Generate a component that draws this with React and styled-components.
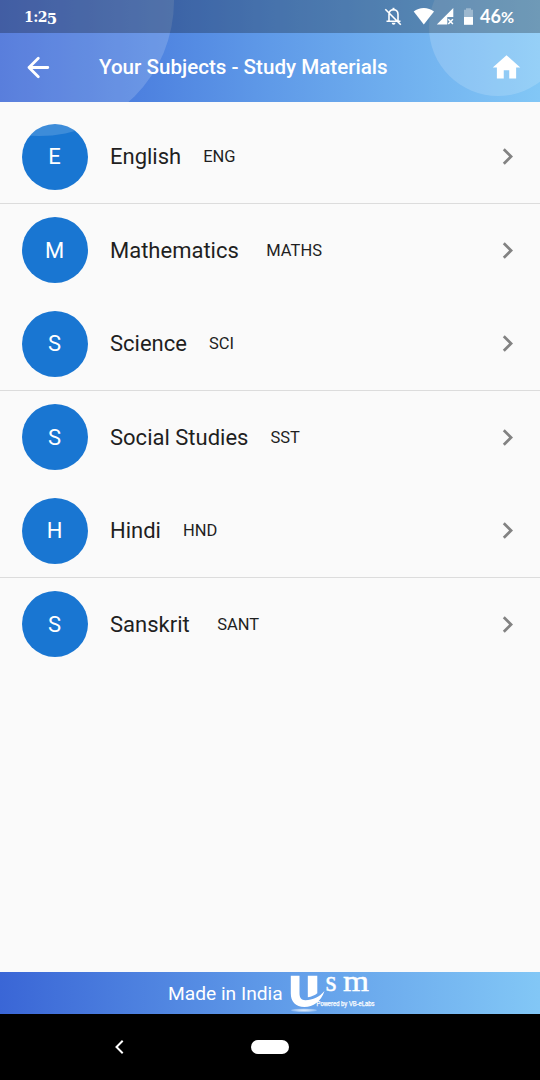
import React from "react";
import { MdChevronRight, MdHome } from "react-icons/md";
import styled, { createGlobalStyle, ThemeProvider } from "styled-components";

const theme = {
  background: "#fafafa",
  avatar: "#1976d2",
  text: "#1f1f1f",
  divider: "#dcdcdc",
  chevron: "#828282",
  gradient: "linear-gradient(90deg, #3a66d6 0%, #5f9ae8 50%, #82c7f6 100%)",
};

const GlobalStyle = createGlobalStyle`
  * {
    box-sizing: border-box;
  }
  body {
    margin: 0;
    font-family: Roboto, sans-serif;
  }
  svg {
    display: block;
    flex-shrink: 0;
    overflow: visible;
  }
`;

const Screen = styled.div`
  position: relative;
  width: 540px;
  height: 1080px;
  display: flex;
  flex-direction: column;
  overflow: hidden;
  background-color: ${({ theme }) => theme.background};
`;

const Header = styled.header`
  position: relative;
  height: 101.5px;
  flex-shrink: 0;
  background: ${({ theme }) => theme.gradient};
  color: #fff;
`;

const Bubble = styled.div`
  position: absolute;
  left: ${({ $x, $size }) => $x - $size / 2}px;
  top: ${({ $y, $size }) => $y - $size / 2}px;
  width: ${({ $size }) => $size}px;
  height: ${({ $size }) => $size}px;
  border-radius: 50%;
  background-color: rgba(255, 255, 255, 0.16);
  pointer-events: none;
  z-index: 1;
`;

const StatusBar = styled.div`
  position: relative;
  z-index: 2;
  height: 33px;
  padding: 0 25px 0 24px;
  display: flex;
  align-items: center;
  background-color: rgba(0, 0, 0, 0.26);
`;

const Clock = styled.span`
  font-family: "DejaVu Serif", serif;
  font-size: 14px;
  line-height: 20px;
  font-weight: 700;
  letter-spacing: -0.6px;
  margin-right: auto;
`;

const LowDigit = styled.span`
  position: relative;
  top: 2px;
  font-size: 15px;
`;

const StatusIcons = styled.div`
  display: flex;
  align-items: center;
`;

const Battery = styled.span`
  font-family: Lato, sans-serif;
  font-size: 18px;
  line-height: 20px;
  font-weight: 700;
  width: 35px;
  margin-left: 6px;
  white-space: nowrap;
`;

const Percent = styled.span`
  font-size: 16px;
`;

const Toolbar = styled.div`
  height: 68px;
  padding: 0 17px 0 22px;
  display: flex;
  align-items: center;
`;

const Title = styled.h1`
  margin: 0 auto 0 44px;
  font-size: 20.6px;
  line-height: 28px;
  font-weight: 500;
  white-space: nowrap;
`;

const SubjectList = styled.ul`
  flex: 1;
  margin: 0;
  padding: 8.5px 0 0;
  list-style: none;
`;

const SubjectRow = styled.li`
  height: 93.5px;
  padding: 0 16px 0 22px;
  display: flex;
  align-items: center;
  color: ${({ theme }) => theme.text};

  &:nth-child(odd) {
    box-shadow: inset 0 -1px 0 ${({ theme }) => theme.divider};
  }
`;

const Avatar = styled.div`
  width: 66px;
  height: 66px;
  margin-right: 22px;
  padding-right: 1px;
  border-radius: 50%;
  display: flex;
  justify-content: center;
  align-items: center;
  font-size: 22px;
  color: #fff;
  background-color: ${({ theme }) => theme.avatar};
`;

const Name = styled.span`
  font-size: 22px;
  line-height: 29px;
  margin-right: 22px;
  white-space: pre;
`;

const Code = styled.span`
  font-size: 16.5px;
  line-height: 23px;
  margin-right: auto;
`;

const Footer = styled.footer`
  height: 42px;
  padding-left: 168px;
  display: flex;
  background: ${({ theme }) => theme.gradient};
  color: #fff;
`;

const MadeIn = styled.span`
  width: 122px;
  font-size: 19.2px;
  line-height: 44px;
  white-space: nowrap;
`;

const NavBar = styled.nav`
  height: 66px;
  padding-left: 114px;
  display: flex;
  align-items: center;
  background-color: #000;
`;

const HomePill = styled.div`
  width: 38px;
  height: 14px;
  margin-left: 127px;
  border-radius: 7px;
  background-color: #fff;
`;

const subjects = [
  { name: "English", code: "ENG" },
  { name: "Mathematics ", code: "MATHS" },
  { name: "Science", code: "SCI" },
  { name: "Social Studies", code: "SST" },
  { name: "Hindi", code: "HND" },
  { name: "Sanskrit ", code: "SANT" },
];

const SystemIcons = () => (
  <svg width="90" height="22" viewBox="384 6 90 22" fill="#fff">
    <g fill="none" stroke="#fff" strokeWidth="1.6">
      <path d="M389 21v-6.5c0-3 2-4.7 4.5-4.7s4.5 1.7 4.5 4.7V21M386.5 21.3h14M385.3 9.2l15.5 15.5" />
      <path d="M393.5 7.8v2.5" strokeWidth="2" />
    </g>
    <path d="M391.7 22.8h3.8a1.9 1.9 0 0 1-3.8 0z" />
    <path d="M413.7 11.6C416.5 9.2 420 8 423.8 8s7.3 1.2 10.2 3.6L423.8 24.4z" />
    <path d="M453.3 8v9h-6v7.5h-10.5z" />
    <path d="M448.3 19.3l4.6 4.8m0-4.8l-4.6 4.8" stroke="#fff" strokeWidth="1.5" />
    <path d="M466 8.2h5v1.5h2V17h-9V9.7h2z" opacity=".35" />
    <path d="M464 17h9v7.8h-9z" />
  </svg>
);

const BackArrow = () => (
  <svg width="33" height="33" viewBox="0 0 33 33" fill="none" stroke="#fff" strokeWidth="2.8" strokeLinecap="round">
    <path d="M7 16.5h18.8M16.3 7.2L7 16.5l9.3 9.3" strokeLinejoin="round" />
  </svg>
);

const UsmLogo = () => (
  <svg width="90" height="42" viewBox="0 0 90 42" fill="#fff">
    <defs>
      <radialGradient id="shade">
        <stop offset="0" stopColor="#fff" stopOpacity=".85" />
        <stop offset="1" stopColor="#fff" stopOpacity=".25" />
      </radialGradient>
    </defs>
    <path d="M.8 3.8H9.500V21c0 4.800 2 7.200 5.800 7.200C23 28.200 29.500 25 34.500 19 31 29.500 23 35 14.500 35 5.500 35 .8 29.500.8 21.500z" />
    <path d="M17.8 3.8h9.500v17.500c-2.600 2-5.800 3.400-9.500 4z" />
    <ellipse cx="14" cy="38.200" rx="13" ry="1.800" fill="url(#shade)" />
    <g fontFamily="Liberation Serif, serif" fontSize="28.5" stroke="#fff" strokeWidth=".4">
      <text x="35.5" y="19.3">s</text>
      <text x="53" y="19.3" textLength="26" lengthAdjust="spacingAndGlyphs">m</text>
    </g>
    <text
      x="26.5"
      y="33.6"
      fontFamily="Liberation Sans, sans-serif"
      fontSize="6.5"
      textLength="58"
      lengthAdjust="spacingAndGlyphs"
      stroke="#fff"
      strokeWidth=".25"
    >
      Powered by VB-eLabs
    </text>
  </svg>
);

const Subject = ({ subject }) => (
  <SubjectRow>
    <Avatar>{subject.name[0]}</Avatar>
    <Name>{subject.name}</Name>
    <Code>{subject.code}</Code>
    <MdChevronRight size={33} color={theme.chevron} />
  </SubjectRow>
);

export default function App() {
  return (
    <ThemeProvider theme={theme}>
      <GlobalStyle />
      <Screen>
        <Header>
          <StatusBar>
            <Clock>
              1:2<LowDigit>5</LowDigit>
            </Clock>
            <StatusIcons>
              <SystemIcons />
              <Battery>
                46<Percent>%</Percent>
              </Battery>
            </StatusIcons>
          </StatusBar>
          <Toolbar>
            <BackArrow />
            <Title>Your Subjects - Study Materials</Title>
            <MdHome size={33} />
          </Toolbar>
        </Header>
        <Bubble $x={39} $y={1} $size={270} />
        <Bubble $x={498} $y={27} $size={138} />
        <SubjectList>
          {subjects.map((subject) => (
            <Subject key={subject.code} subject={subject} />
          ))}
        </SubjectList>
        <Footer>
          <MadeIn>Made in India</MadeIn>
          <UsmLogo />
        </Footer>
        <NavBar>
          <svg width="10" height="16" viewBox="0 0 10 16" fill="none" stroke="#fff" strokeWidth="2">
            <path d="M8.7 1.8L2.5 8l6.2 6.2" />
          </svg>
          <HomePill />
        </NavBar>
      </Screen>
    </ThemeProvider>
  );
}
